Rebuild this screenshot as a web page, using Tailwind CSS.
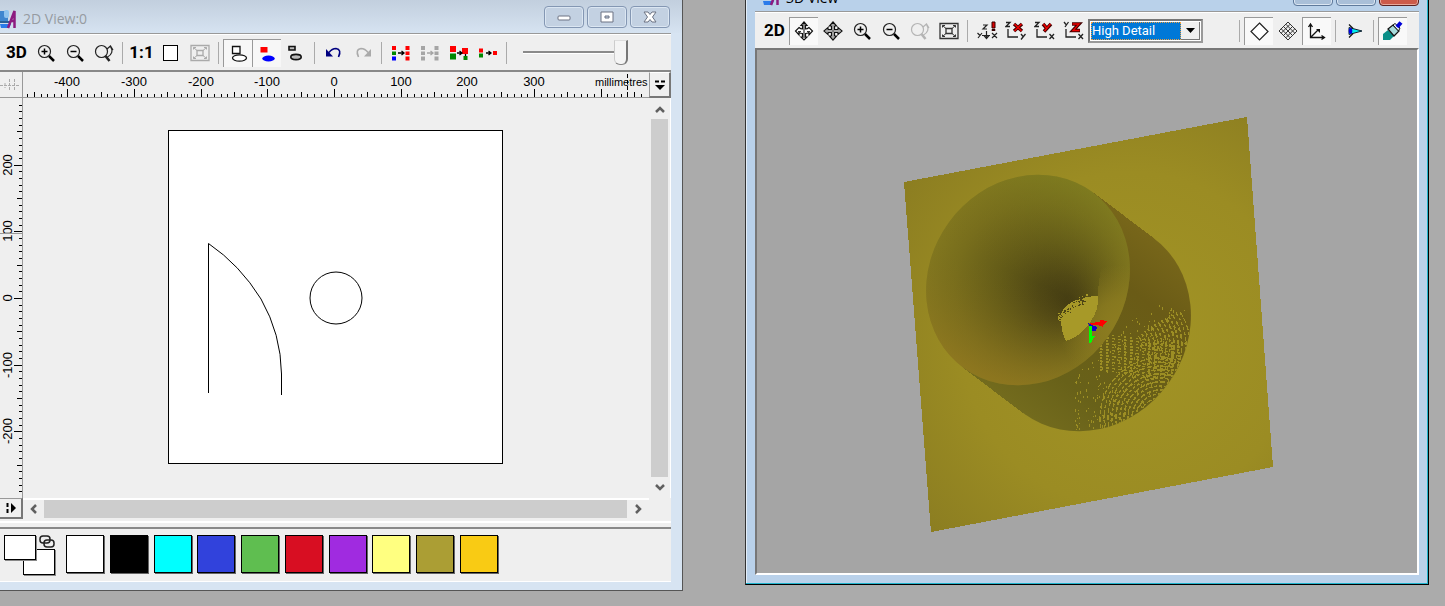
<!DOCTYPE html>
<html lang="en">
<head>
    <meta charset="UTF-8">
    <meta name="viewport" content="width=device-width, initial-scale=1.0">
    <title>2D View / 3D View</title>
    <script src="https://cdn.jsdelivr.net/npm/@tailwindcss/browser@4"></script>
</head>
<body class="bg-[#ababab] font-['Liberation_Sans',Arial,sans-serif] text-black">

    <!-- Icon sprite -->
    <svg class="hidden" xmlns="http://www.w3.org/2000/svg">
        <symbol id="i-app" viewBox="0 0 18 20">
            <rect x="0" y="2" width="8" height="11" fill="#3f86cf"/>
            <rect x="4" y="1" width="5" height="8" rx="2" fill="#8fc3ee"/>
            <path d="M0 12h10v2H0z" fill="#2a5f96"/>
            <path d="M0 15h11l-2 4H1z" fill="#2b7bea"/>
            <path d="M8 19L14.500 2V19M10 12h5" fill="none" stroke="#8d1b80" stroke-width="2.500"/>
        </symbol>
        <symbol id="i-zoom-in" viewBox="0 0 20 20">
            <circle cx="8.500" cy="8.500" r="6" fill="none" stroke="#222" stroke-width="1.200"/>
            <path d="M5.500 8.500h6M8.500 5.500v6" stroke="#000" stroke-width="1.500"/>
            <path d="M13 13l5 5" stroke="#000" stroke-width="2.500"/>
        </symbol>
        <symbol id="i-zoom-out" viewBox="0 0 20 20">
            <circle cx="8.500" cy="8.500" r="6" fill="none" stroke="#222" stroke-width="1.200"/>
            <path d="M5.500 8.500h6" stroke="#000" stroke-width="1.500"/>
            <path d="M13 13l5 5" stroke="#000" stroke-width="2.500"/>
        </symbol>
        <symbol id="i-zoom-prev" viewBox="0 0 20 20">
            <circle cx="7.500" cy="8.500" r="6" fill="none" stroke="currentColor" stroke-width="1.200"/>
            <path d="M11.500 13l4 5" stroke="currentColor" stroke-width="2.500"/>
            <path d="M13.500 14q7-4 3-10.500M13 6l3.500-3 2.500 4" fill="none" stroke="currentColor" stroke-width="1.200"/>
        </symbol>
        <symbol id="i-fit" viewBox="0 0 20 20">
            <path d="M1 2.500h18v15H1zM7 7.500h6v5H7z" fill="none" stroke="currentColor" stroke-width="1.300"/>
            <path d="M3.500 4.500l3.500 3M16.500 4.500l-3.500 3M3.500 15.500l3.500-3M16.500 15.500l-3.500-3M3.500 6.500v-2H6M16.500 6.500v-2H14M3.500 13.500v2H6M16.500 13.500v2H14" fill="none" stroke="currentColor" stroke-width="1"/>
        </symbol>
        <symbol id="i-move" viewBox="0 0 20 20">
            <path d="M10 1l3.500 4h-2v3.500H15v-2l4 3.500-4 3.500v-2h-3.500V15h2L10 19l-3.500-4h2v-3.500H5v2L1 10l4-3.500v2h3.500V5h-2z" fill="#fff" stroke="#111" stroke-width="1.200"/>
            <path d="M10 3v14M3 10h14" stroke="#555" stroke-width="1"/>
        </symbol>
        <symbol id="i-orbit" viewBox="0 0 20 20">
            <path d="M10 1l3 3.500h-1.500V8q2 0 3.500-1.500L18.500 10 15 14v-2.500q-2 1-3.500 1V16H13l-3 3-3-3h1.500v-3.500q-2 0-3.500-1V14l-3.500-4L5 6.500Q6.500 8 8.500 8V4.500H7z" fill="#fff" stroke="#111" stroke-width="1.200"/>
            <path d="M10 3v14M4 10.500h3M13 10.500h3" stroke="#333" stroke-width="1.200"/>
        </symbol>
        <symbol id="i-shapes" viewBox="0 0 20 20">
            <path d="M4.500 3.500h7.500v7H4.500z" fill="#fff" stroke="#111" stroke-width="1.300"/>
            <ellipse cx="11.500" cy="15" rx="7" ry="3.200" fill="#fff" stroke="#111" stroke-width="1.300"/>
        </symbol>
        <symbol id="i-shapes-fill" viewBox="0 0 20 20">
            <path d="M3.500 4h7v5.500h-7z" fill="#f00"/>
            <ellipse cx="11.500" cy="15.500" rx="6.200" ry="3" fill="#00f"/>
        </symbol>
        <symbol id="i-shapes-small" viewBox="0 0 20 20">
            <path d="M3 3.500h6V7H3z" fill="#bbb" stroke="#111" stroke-width="1.600"/>
            <ellipse cx="10" cy="14" rx="5.200" ry="2.600" fill="#bbb" stroke="#111" stroke-width="1.600"/>
        </symbol>
        <symbol id="i-undo" viewBox="0 0 20 20">
            <path d="M5 9.500q3-4 7-4 6 1 2.500 8.500" fill="none" stroke="currentColor" stroke-width="1.600"/>
            <path d="M2 6v7.500h7z" fill="currentColor"/>
        </symbol>
        <symbol id="i-map" viewBox="0 0 20 20">
            <path d="M1 3h4v4H1zM14.500 3h4v4h-4zM14.500 8.500h4v3.500h-4zM14.500 13.500h4v4h-4z" fill="#f00"/>
            <path d="M1 8.500h4V12H1z" fill="#080"/>
            <path d="M1 13.500h4v4H1z" fill="#00f"/>
            <path d="M7 10h6M10.500 8l2.500 2-2.500 2" fill="none" stroke="#000" stroke-width="1.300"/>
        </symbol>
        <symbol id="i-map-off" viewBox="0 0 20 20">
            <path d="M1 3h4v4H1zM14.500 3h4v4h-4zM14.500 8.500h4v3.500h-4zM14.500 13.500h4v4h-4zM1 8.500h4V12H1zM1 13.500h4v4H1z" fill="#a5a5a5"/>
            <path d="M7 10h6M10.500 8l2.500 2-2.500 2" fill="none" stroke="#a5a5a5" stroke-width="1.300"/>
        </symbol>
        <symbol id="i-merge" viewBox="0 0 20 20">
            <path d="M1 3h6v6H1zM13 5h6v6h-6z" fill="#f00"/>
            <path d="M1 10.500h6v6H1zM14.500 13h4v4h-4z" fill="#080"/>
            <path d="M8 10h5M10.500 8l2.500 2-2.500 2M16.500 11v2" fill="none" stroke="#000" stroke-width="1.300"/>
        </symbol>
        <symbol id="i-merge-small" viewBox="0 0 20 20">
            <path d="M1 5.500h4v4H1zM15 8h4v4h-4z" fill="#f00"/>
            <path d="M1 10.500h4v4H1z" fill="#080"/>
            <path d="M8 10h5M10.500 8l2.500 2-2.500 2" fill="none" stroke="#000" stroke-width="1.300"/>
        </symbol>
        <symbol id="i-axis-iso" viewBox="0 0 22 20">
            <path d="M7 4h4L7 8h4M1.500 12l2.500 2.500M6 12l-4 5M16 12l5 5M21 12l-5 5M10.500 10v7M8 14.500l2.500 3 2.500-3M6 14.500h8" fill="none" stroke="#222" stroke-width="1.200"/>
            <path d="M16 1h3v6h-3zM16 8.500h3v1h-3z" fill="#d00" stroke="#300" stroke-width="1"/>
        </symbol>
        <symbol id="i-axis-x" viewBox="0 0 22 20">
            <path d="M1 1.500h4L1 5.500h4M3 8v8h10M16 13l2 2.500M20.500 13L16 18.500" fill="none" stroke="#222" stroke-width="1.300"/>
            <path d="M9 3l8 7M17 3l-8 7" stroke="#400" stroke-width="3.500"/>
            <path d="M9.500 3l7 7M16.500 3l-7 7" stroke="#e00" stroke-width="1.500"/>
        </symbol>
        <symbol id="i-axis-y" viewBox="0 0 22 20">
            <path d="M1 1.500h4L1 5.500h4M3 8v8h10M15.500 13l4.500 5M20 13l-4.500 5" fill="none" stroke="#222" stroke-width="1.300"/>
            <path d="M9 3l3.500 4M17 3l-7 7.500" stroke="#400" stroke-width="3.500"/>
            <path d="M9.500 3l3 4M16.500 3l-6 7" stroke="#e00" stroke-width="1.500"/>
        </symbol>
        <symbol id="i-axis-z" viewBox="0 0 22 20">
            <path d="M1 1l2 2.500M5.500 1L2 6M3 8v8h10M15.500 13l4.500 5M20 13l-4.500 5" fill="none" stroke="#222" stroke-width="1.300"/>
            <path d="M9 3h7l-6 6.500h7" fill="none" stroke="#400" stroke-width="3.500"/>
            <path d="M9.500 3H16l-6 6.500h6.500" fill="none" stroke="#e00" stroke-width="1.300"/>
        </symbol>
        <symbol id="i-diamond" viewBox="0 0 20 20">
            <path d="M10.500 2l8.500 8.500-8.500 8.500L2 10.500z" fill="#fff" stroke="#222" stroke-width="1.200"/>
        </symbol>
        <symbol id="i-mesh" viewBox="0 0 20 20">
            <path d="M10 1l9 9-9 9-9-9zM7.800 3.200l9 9M5.500 5.500l9 9M3.200 7.800l9 9M12.200 3.200l-9 9M14.500 5.500l-9 9M16.800 7.800l-9 9" fill="none" stroke="#333" stroke-width="1"/>
        </symbol>
        <symbol id="i-axes" viewBox="0 0 20 20">
            <path d="M3.500 4v12.500h13M3.500 16.500l8-8M1.500 6l2-3 2 3M14.500 14.500l3 2-3 2" fill="none" stroke="#111" stroke-width="1.300"/>
            <path d="M9 8h4v4z" fill="#111"/>
        </symbol>
        <symbol id="i-eye" viewBox="0 0 20 20">
            <path d="M4 6.500L17 10 4 13.500z" fill="#0ee" stroke="#123" stroke-width="1"/>
            <ellipse cx="5.500" cy="10" rx="1.800" ry="3" fill="#00d"/>
            <path d="M4 3.500l4 4M4 16.500l4-4" stroke="#111" stroke-width="1.200"/>
        </symbol>
        <symbol id="i-brush" viewBox="0 0 22 20">
            <path d="M1 13l5-4 6 6-4 4H1z" fill="#0a8f88"/>
            <path d="M6 8l5-4 6 6-5 5z" fill="#a8dcdc" stroke="#111" stroke-width="1.200"/>
            <path d="M11 4l2-1.500 5 4.500-1.500 3z" fill="#e8f6f6" stroke="#111" stroke-width="1"/>
            <path d="M15 6l4-4.500" stroke="#0000d8" stroke-width="4"/>
        </symbol>
    </svg>

    <main class="grid h-screen min-h-96 grid-cols-[683fr_684fr] gap-[62px] overflow-hidden pr-4 pb-[15px]">

        <!-- 2D window -->
        <section aria-label="2D View" class="flex min-w-0 flex-col border-r border-b border-[#555] bg-[#d7e4f2] pb-2">
            <header class="flex h-[33px] shrink-0 items-center bg-linear-to-b from-[#c2cfde] to-[#d6e3f1] pr-3">
                <svg class="mt-1 h-5 w-[18px]"><use href="#i-app"/></svg>
                <h1 class="mt-1 ml-[5px] font-['Open_Sans','Noto_Sans',sans-serif] text-sm text-[#969ba1]">2D View:0</h1>
                <div class="mt-px ml-auto flex gap-[3px]">
                    <button type="button" aria-label="Minimize" class="grid h-[22px] w-10 place-items-center rounded-sm border border-[#8497b3] bg-[#c3d1e2] shadow-[inset_0_0_0_1px_#dbe6f2]">
                        <svg width="14" height="8"><rect x="1" y="3" width="12" height="4" rx="1" fill="#fff" stroke="#6c7383"/></svg>
                    </button>
                    <button type="button" aria-label="Maximize" class="grid h-[22px] w-10 place-items-center rounded-sm border border-[#8497b3] bg-[#c3d1e2] shadow-[inset_0_0_0_1px_#dbe6f2]">
                        <svg width="14" height="12"><path d="M1 1h12v10H1zM5 5h4v2H5z" fill="#fff" fill-rule="evenodd" stroke="#6c7383"/></svg>
                    </button>
                    <button type="button" aria-label="Close" class="grid h-[22px] w-10 place-items-center rounded-sm border border-[#8497b3] bg-[#c3d1e2] shadow-[inset_0_0_0_1px_#dbe6f2]">
                        <svg width="14" height="12"><path d="M1 1h4l2 2.500L9 1h4L9.500 6l3.500 5H9L7 8.500 5 11H1l3.500-5z" fill="#fff" stroke="#6c7383"/></svg>
                    </button>
                </div>
            </header>

            <div class="mr-[11px] flex min-h-0 grow flex-col border-t border-[#999] bg-[#efefef]">
                <!-- Toolbar -->
                <div role="toolbar" aria-label="2D tools" class="flex h-[38px] shrink-0 items-center border-t border-b-2 border-t-white border-b-[#888] pl-[2px]">
                    <button type="button" class="h-7 w-[29px] font-[Roboto,sans-serif] text-[17px] font-bold">3D</button>
                    <button type="button" aria-label="Zoom in" class="grid h-7 w-[29px] place-items-center"><svg class="size-5"><use href="#i-zoom-in"/></svg></button>
                    <button type="button" aria-label="Zoom out" class="grid h-7 w-[29px] place-items-center"><svg class="size-5"><use href="#i-zoom-out"/></svg></button>
                    <button type="button" aria-label="Zoom previous" class="grid h-7 w-[29px] place-items-center text-[#222]"><svg class="size-5"><use href="#i-zoom-prev"/></svg></button>
                    <span class="mx-1 h-[22px] w-px bg-[#aaa]"></span>
                    <button type="button" class="h-7 w-[29px] font-[Roboto,sans-serif] text-[17px] font-bold">1:1</button>
                    <button type="button" aria-label="Zoom page" class="grid h-7 w-[29px] place-items-center"><span class="h-4 w-[15px] border border-black bg-white"></span></button>
                    <button type="button" aria-label="Zoom selection" class="grid h-7 w-[29px] place-items-center text-[#aaa]"><svg class="size-5"><use href="#i-fit"/></svg></button>
                    <span class="mx-1 h-[22px] w-px bg-[#aaa]"></span>
                    <button type="button" aria-label="Wireframe" aria-pressed="true" class="grid h-7 w-[29px] place-items-center border-t border-l border-[#999] bg-[#f7f7f7]"><svg class="size-5"><use href="#i-shapes"/></svg></button>
                    <button type="button" aria-label="Filled" aria-pressed="true" class="grid h-7 w-[29px] place-items-center border-t border-l border-[#999] bg-[#f7f7f7]"><svg class="size-5"><use href="#i-shapes-fill"/></svg></button>
                    <button type="button" aria-label="Outline" class="grid h-7 w-[29px] place-items-center"><svg class="size-5"><use href="#i-shapes-small"/></svg></button>
                    <span class="mx-1 h-[22px] w-px bg-[#aaa]"></span>
                    <button type="button" aria-label="Undo" class="grid h-7 w-[29px] place-items-center text-[#000080]"><svg class="size-5"><use href="#i-undo"/></svg></button>
                    <button type="button" aria-label="Redo" class="grid h-7 w-[29px] place-items-center text-[#aaa]"><svg class="size-5 -scale-x-100"><use href="#i-undo"/></svg></button>
                    <span class="mx-1 h-[22px] w-px bg-[#aaa]"></span>
                    <button type="button" aria-label="Link colours" class="grid h-7 w-[29px] place-items-center"><svg class="size-5"><use href="#i-map"/></svg></button>
                    <button type="button" aria-label="Unlink colours" class="grid h-7 w-[29px] place-items-center"><svg class="size-5"><use href="#i-map-off"/></svg></button>
                    <button type="button" aria-label="Add colour" class="grid h-7 w-[29px] place-items-center"><svg class="size-5"><use href="#i-merge"/></svg></button>
                    <button type="button" aria-label="Reduce colours" class="grid h-7 w-[29px] place-items-center"><svg class="size-5"><use href="#i-merge-small"/></svg></button>
                    <span class="mx-1 h-[22px] w-px bg-[#aaa]"></span>
                    <input type="range" aria-label="Contrast" min="0" max="100" value="100" class="ml-3 h-[26px] w-[105px] appearance-none bg-transparent [&::-webkit-slider-runnable-track]:h-[3px] [&::-webkit-slider-runnable-track]:border-b [&::-webkit-slider-runnable-track]:border-white [&::-webkit-slider-runnable-track]:bg-[#8a8a8a] [&::-webkit-slider-thumb]:-mt-[11px] [&::-webkit-slider-thumb]:h-[25px] [&::-webkit-slider-thumb]:w-[14px] [&::-webkit-slider-thumb]:appearance-none [&::-webkit-slider-thumb]:rounded-b-[6px] [&::-webkit-slider-thumb]:border-t [&::-webkit-slider-thumb]:border-r-2 [&::-webkit-slider-thumb]:border-b [&::-webkit-slider-thumb]:border-l [&::-webkit-slider-thumb]:border-t-[#ddd] [&::-webkit-slider-thumb]:border-r-[#777] [&::-webkit-slider-thumb]:border-b-[#888] [&::-webkit-slider-thumb]:border-l-[#ccc] [&::-webkit-slider-thumb]:bg-[#f4f4f4]">
                </div>

                <!-- Rulers, page and scroll bars -->
                <div class="grid min-h-0 grow grid-cols-[23px_1fr_22px] grid-rows-[26px_1fr_23px] border-b-2 border-white">
                    <div class="grid place-items-center border-r border-b border-[#999]">
                        <svg width="22" height="14"><path d="M0 7.500h20M9.500 1v12M14.500 1v12M5 5v5" stroke="#aaa" stroke-dasharray="3 1" fill="none"/></svg>
                    </div>
                    <svg id="ruler-x" class="h-full w-full overflow-hidden border-b border-[#999] text-[13px]"></svg>
                    <button type="button" aria-label="Ruler units" class="grid place-items-center border-t border-r-2 border-b-2 border-l border-t-white border-r-[#777] border-b-[#777] border-l-[#999]">
                        <svg width="12" height="12"><path d="M1 2.500h10" stroke="#000" stroke-width="2" stroke-dasharray="4 2"/><path d="M1 6h10l-5 5z"/></svg>
                    </button>

                    <svg id="ruler-y" class="h-full w-full overflow-hidden border-r border-[#999] text-[13px]"></svg>
                    <svg id="page" class="h-full w-full overflow-hidden" fill="none" stroke="#000">
                        <rect x="145.500" y="32.500" width="334" height="333" fill="#fff"/>
                        <path d="M185.500 295V145.500Q217 167 238 201Q258 236 258.500 276V297"/>
                        <circle cx="313" cy="200" r="26"/>
                    </svg>
                    <div class="flex flex-col border-r border-white px-[2px]">
                        <button type="button" aria-label="Scroll up" class="grid h-[21px] place-items-center"><svg width="12" height="8"><path d="M2 7l4-4 4 4" fill="none" stroke="#606060" stroke-width="2.500"/></svg></button>
                        <div class="grow bg-[#cdcdcd]"></div>
                        <button type="button" aria-label="Scroll down" class="grid h-[21px] place-items-center"><svg width="12" height="8"><path d="M2 1l4 4 4-4" fill="none" stroke="#606060" stroke-width="2.500"/></svg></button>
                    </div>

                    <button type="button" aria-label="Next view" class="mb-[2px] grid place-items-center border-t border-r-2 border-b-2 border-t-[#999] border-r-[#777] border-b-[#777]">
                        <svg width="12" height="12"><path d="M2.500 1v10" stroke="#000" stroke-width="2" stroke-dasharray="4 2"/><path d="M6 1v10l5-5z"/></svg>
                    </button>
                    <div class="flex items-stretch border-t-2 border-white pb-[3px]">
                        <button type="button" aria-label="Scroll left" class="grid w-[21px] place-items-center"><svg width="8" height="12"><path d="M6 2L2 6l4 4" fill="none" stroke="#606060" stroke-width="2.500"/></svg></button>
                        <div class="grow bg-[#cdcdcd]"></div>
                        <button type="button" aria-label="Scroll right" class="grid w-[22px] place-items-center"><svg width="8" height="12"><path d="M2 2l4 4-4 4" fill="none" stroke="#606060" stroke-width="2.500"/></svg></button>
                    </div>
                    <div></div>
                </div>

                <!-- Colour palette -->
                <div class="mt-1 flex h-[55px] shrink-0 items-start border-t-2 border-b border-t-[#888] border-b-white pt-[6px]">
                    <div class="relative ml-1 h-10 w-[51px]">
                        <button type="button" aria-label="Secondary colour" class="absolute right-0 bottom-0 h-[26px] w-8 border border-black bg-white shadow-[1px_1px_0_#888]"></button>
                        <button type="button" aria-label="Primary colour" class="absolute top-0 left-0 h-[25px] w-8 border border-black bg-white shadow-[1px_1px_0_#888]"></button>
                        <svg class="absolute top-0 right-0" width="16" height="14" fill="none" stroke="#222" stroke-width="1.500"><rect x="1" y="1" width="10" height="7" rx="3"/><rect x="5" y="5" width="10" height="7" rx="3"/></svg>
                    </div>
                    <div class="ml-[11px] flex w-[432px] justify-between">
                        <button type="button" aria-label="White" class="size-[38px] border border-black bg-white shadow-[1px_1px_0_#666]"></button>
                        <button type="button" aria-label="Black" class="size-[38px] border border-black bg-black shadow-[1px_1px_0_#666]"></button>
                        <button type="button" aria-label="Cyan" class="size-[38px] border border-black bg-[#00ffff] shadow-[1px_1px_0_#666]"></button>
                        <button type="button" aria-label="Blue" class="size-[38px] border border-black bg-[#3142dc] shadow-[1px_1px_0_#666]"></button>
                        <button type="button" aria-label="Green" class="size-[38px] border border-black bg-[#5fbe50] shadow-[1px_1px_0_#666]"></button>
                        <button type="button" aria-label="Red" class="size-[38px] border border-black bg-[#d80e22] shadow-[1px_1px_0_#666]"></button>
                        <button type="button" aria-label="Purple" class="size-[38px] border border-black bg-[#a02be0] shadow-[1px_1px_0_#666]"></button>
                        <button type="button" aria-label="Yellow" class="size-[38px] border border-black bg-[#ffff80] shadow-[1px_1px_0_#666]"></button>
                        <button type="button" aria-label="Olive" class="size-[38px] border border-black bg-[#ab9e34] shadow-[1px_1px_0_#666]"></button>
                        <button type="button" aria-label="Amber" class="size-[38px] border border-black bg-[#f9cb14] shadow-[1px_1px_0_#666]"></button>
                    </div>
                </div>
            </div>
        </section>

        <!-- 3D window, its title bar runs off the top of the desktop -->
        <section aria-label="3D View" class="mb-[6px] flex min-w-0 flex-col border-r border-b border-l border-black border-l-[#333] bg-[#b9d1ea] px-[9px] pb-[9px] shadow-[inset_-1px_-1px_0_#20b4cc,inset_1px_0_0_#e4eef8]">
            <header class="flex h-[11px] shrink-0 items-end">
                <svg class="ml-2 h-5 w-[18px] shrink-0 translate-y-[-5px]"><use href="#i-app"/></svg>
                <h2 class="mb-[5px] ml-[5px] font-['Open_Sans','Noto_Sans',sans-serif] text-sm leading-4">3D View</h2>
                <div class="mb-[5px] ml-auto flex gap-[3px]">
                    <button type="button" aria-label="Minimize" class="h-[22px] w-10 rounded-sm border border-[#5f7a9c] bg-[#a9bfd8] shadow-[inset_0_0_0_1px_#dbe6f2]"></button>
                    <button type="button" aria-label="Maximize" class="h-[22px] w-10 rounded-sm border border-[#5f7a9c] bg-[#a9bfd8] shadow-[inset_0_0_0_1px_#dbe6f2]"></button>
                    <button type="button" aria-label="Close" class="h-[22px] w-10 rounded-sm border border-[#5a2323] bg-[#cc5a4a] shadow-[inset_0_0_0_1px_#e8a79a]"></button>
                </div>
            </header>

            <div class="flex min-h-0 grow flex-col border-t border-[#999] bg-[#efefef]">
                <!-- Toolbar -->
                <div role="toolbar" aria-label="3D tools" class="flex h-9 shrink-0 items-center border-t border-white pl-[5px]">
                    <button type="button" class="h-7 w-[29px] font-[Roboto,sans-serif] text-[17px] font-bold">2D</button>
                    <button type="button" aria-label="Orbit" aria-pressed="true" class="grid h-7 w-[29px] place-items-center border-t border-l border-[#999] bg-[#f9f9f9]"><svg class="size-5"><use href="#i-orbit"/></svg></button>
                    <button type="button" aria-label="Pan" class="grid h-7 w-[29px] place-items-center"><svg class="size-5"><use href="#i-move"/></svg></button>
                    <button type="button" aria-label="Zoom in" class="grid h-7 w-[29px] place-items-center"><svg class="size-5"><use href="#i-zoom-in"/></svg></button>
                    <button type="button" aria-label="Zoom out" class="grid h-7 w-[29px] place-items-center"><svg class="size-5"><use href="#i-zoom-out"/></svg></button>
                    <button type="button" aria-label="Zoom previous" class="grid h-7 w-[29px] place-items-center text-[#b4b4b4]"><svg class="size-5"><use href="#i-zoom-prev"/></svg></button>
                    <button type="button" aria-label="Fit" class="grid h-7 w-[29px] place-items-center text-[#333]"><svg class="size-5"><use href="#i-fit"/></svg></button>
                    <span class="mx-1 h-[22px] w-px bg-[#aaa]"></span>
                    <button type="button" aria-label="Isometric view" class="grid h-7 w-[29px] place-items-center"><svg class="h-5 w-[22px]"><use href="#i-axis-iso"/></svg></button>
                    <button type="button" aria-label="View along X" class="grid h-7 w-[29px] place-items-center"><svg class="h-5 w-[22px]"><use href="#i-axis-x"/></svg></button>
                    <button type="button" aria-label="View along Y" class="grid h-7 w-[29px] place-items-center"><svg class="h-5 w-[22px]"><use href="#i-axis-y"/></svg></button>
                    <button type="button" aria-label="View down Z" class="grid h-7 w-[29px] place-items-center"><svg class="h-5 w-[22px]"><use href="#i-axis-z"/></svg></button>
                    <div class="mr-8 flex h-6 w-[115px] border-2 border-t-[#777] border-r-[#999] border-b-[#999] border-l-[#777] bg-white p-px">
                        <select aria-label="Shading detail" class="h-full min-w-0 grow appearance-none border border-dotted border-[#f0a040] bg-[#0078d7] font-[Roboto,sans-serif] text-[13px] leading-4 text-white">
                            <option>High Detail</option>
                            <option>Normal Detail</option>
                            <option>Low Detail</option>
                        </select>
                        <span class="pointer-events-none grid w-[19px] shrink-0 place-items-center border-r border-b border-[#777] bg-[#efefef]">
                            <svg width="9" height="5"><path d="M0 0h9L4.500 5z"/></svg>
                        </span>
                    </div>
                    <span class="mx-1 h-[22px] w-px bg-[#aaa]"></span>
                    <button type="button" aria-label="Draw zero plane" aria-pressed="true" class="grid h-7 w-[29px] place-items-center border-t border-l border-[#999] bg-[#f9f9f9]"><svg class="size-5"><use href="#i-diamond"/></svg></button>
                    <button type="button" aria-label="Wireframe" class="grid h-7 w-[29px] place-items-center"><svg class="size-5"><use href="#i-mesh"/></svg></button>
                    <button type="button" aria-label="Draw origin" aria-pressed="true" class="grid h-7 w-[29px] place-items-center border-t border-l border-[#999] bg-[#f9f9f9]"><svg class="size-5"><use href="#i-axes"/></svg></button>
                    <span class="mx-1 h-[22px] w-px bg-[#aaa]"></span>
                    <button type="button" aria-label="Lighting" class="grid h-7 w-[29px] place-items-center"><svg class="size-5"><use href="#i-eye"/></svg></button>
                    <span class="mx-1 h-[22px] w-px bg-[#aaa]"></span>
                    <button type="button" aria-label="Colour shading" aria-pressed="true" class="grid h-7 w-[29px] place-items-center border-t border-l border-[#999] bg-[#f9f9f9]"><svg class="h-5 w-[22px]"><use href="#i-brush"/></svg></button>
                </div>

                <!-- Relief model; the inner group uses desktop coordinates -->
                <div class="min-h-0 grow border-2 border-t-[#777] border-r-white border-b-white border-l-[#777] bg-[#a5a5a5]">
                    <svg class="h-full w-full overflow-hidden">
                        <defs>
                            <radialGradient id="plane" gradientUnits="userSpaceOnUse" cx="1130" cy="340" r="280">
                                <stop offset="0" stop-color="#a29425"/>
                                <stop offset=".6" stop-color="#9b8c23"/>
                                <stop offset="1" stop-color="#8b7d21"/>
                            </radialGradient>
                            <linearGradient id="wall" gradientUnits="userSpaceOnUse" x1="1150" y1="210" x2="1000" y2="410">
                                <stop offset="0" stop-color="#7c6a1b"/>
                                <stop offset=".3" stop-color="#6a5b16"/>
                                <stop offset=".75" stop-color="#686119"/>
                                <stop offset="1" stop-color="#756d1e"/>
                            </linearGradient>
                            <radialGradient id="bowl" gradientUnits="userSpaceOnUse" cx="1028" cy="280" r="112" fx="1068" fy="303">
                                <stop offset="0" stop-color="#443c12"/>
                                <stop offset=".2" stop-color="#4f4714"/>
                                <stop offset=".45" stop-color="#625a17"/>
                                <stop offset=".75" stop-color="#786e1c"/>
                                <stop offset="1" stop-color="#867b20"/>
                            </radialGradient>
                            <linearGradient id="tint" gradientUnits="userSpaceOnUse" x1="1070" y1="185" x2="990" y2="375">
                                <stop offset="0" stop-color="#707c1e" stop-opacity=".3"/>
                                <stop offset=".5" stop-color="#7a6a1c" stop-opacity="0"/>
                                <stop offset="1" stop-color="#96741f" stop-opacity=".5"/>
                            </linearGradient>
                            <radialGradient id="lip" gradientUnits="userSpaceOnUse" cx="1118" cy="325" r="60">
                                <stop offset="0" stop-color="#8c7c20"/>
                                <stop offset=".4" stop-color="#8c7c20" stop-opacity=".8"/>
                                <stop offset="1" stop-color="#8c7c20" stop-opacity="0"/>
                            </radialGradient>
                            <clipPath id="wall-clip">
                                <ellipse cx="1089" cy="326" rx="109" ry="98" transform="rotate(-54 1089 326)"/>
                            </clipPath>
                            <clipPath id="bowl-clip">
                                <ellipse cx="1028" cy="280" rx="109" ry="98" transform="rotate(-54 1028 280)"/>
                            </clipPath>
                        </defs>
                        <g transform="translate(-757 -50)" shape-rendering="crispEdges">
                            <path d="M904 182L1247 117L1273 467L931 532z" fill="url(#plane)"/>
                            <path d="M1094 193L1155 239L1023 413L962 367z" fill="url(#wall)"/>
                            <rect x="970" y="200" width="240" height="250" fill="url(#wall)" clip-path="url(#wall-clip)"/>
                            <g id="moire" clip-path="url(#wall-clip)" fill="none" stroke="#9c8e24"></g>
                            <g clip-path="url(#bowl-clip)">
                                <rect x="910" y="160" width="240" height="240" fill="url(#bowl)"/>
                                <rect x="910" y="160" width="240" height="240" fill="url(#tint)"/>
                                <path d="M1098 292Q1100 240 1140 230V400H1030Q1040 350 1066 341Q1095 325 1098 296z" fill="url(#lip)"/>
                            </g>
                            <path d="M1062 312Q1070 297 1098 296Q1099 310 1091 321Q1082 336 1066 341Q1062 334 1061 322z" fill="#a79928"/>
                            <g id="speckle"></g>
                            <path d="M1090 323l10-1 0-2 7 1-3 3-1 3-5-2-7 0z" fill="#f00"/>
                            <path d="M1088 323l4 2 5 2-1 4-4 0-2-3z" fill="#10c"/>
                            <path d="M1089 326h3v10h3l-2 3-2 4h-2z" fill="#0f0"/>
                        </g>
                    </svg>
                </div>
            </div>
        </section>
    </main>

    <script>
        const NS = 'http://www.w3.org/2000/svg';

        function add(parent, tag, attrs, text) {
            const el = document.createElementNS(NS, tag);
            for (const key in attrs) el.setAttribute(key, attrs[key]);
            if (text) el.textContent = text;
            parent.appendChild(el);
        }

        // Rulers: one tick per 10 mm, 200 px for every 300 mm
        const rulerX = document.getElementById('ruler-x');
        const rulerY = document.getElementById('ruler-y');
        const step = 20 / 3;

        for (let i = -46; i <= 46; i++) {
            const len = i % 10 === 0 ? 8 : i % 5 === 0 ? 5 : 3;
            const x = Math.round(311 + i * step);
            add(rulerX, 'rect', { x: x, y: 25 - len, width: 1, height: len });
            if (i % 10 === 0 && i < 40) {
                add(rulerX, 'text', { x: x, y: 14, 'text-anchor': 'middle' }, String(i * 10));
            }
        }
        add(rulerX, 'text', { x: 572, y: 14, class: 'text-[11px]' }, 'millimetres');
        add(rulerX, 'path', { d: 'M604.5 2v24', stroke: '#000', 'stroke-dasharray': '4 2' });

        for (let i = -29; i <= 29; i++) {
            const len = i % 10 === 0 ? 8 : i % 5 === 0 ? 5 : 3;
            const y = Math.round(200 - i * step);
            add(rulerY, 'rect', { x: 22 - len, y: y, width: len, height: 1 });
            if (i % 10 === 0) {
                add(rulerY, 'text', { transform: 'translate(12 ' + y + ') rotate(-90)', 'text-anchor': 'middle' }, String(i * 10));
            }
        }
        add(rulerY, 'path', { d: 'M0 135.500h22', stroke: '#999' });

        // Interference bands where the cone wall meets the plane
        const moire = document.getElementById('moire');
        function arc(cx, cy, r, from, to, dash) {
            const p = a => (cx + r * Math.cos(a * Math.PI / 180)) + ' ' + (cy + r * Math.sin(a * Math.PI / 180));
            add(moire, 'path', { d: 'M' + p(from) + 'A' + r + ' ' + r + ' 0 0 1 ' + p(to), 'stroke-dasharray': dash, 'stroke-width': r > 20 && r < 52 ? 1.6 : 1.2 });
        }
        for (let r = 12; r < 62; r += 4) arc(1130, 345, r, -48 + r / 4, 30, r % 8 ? '5 2' : '3 2');
        for (let r = 12; r < 64; r += 4) arc(1160, 418, r, 170, 285, r % 8 ? '5 2' : '3 2');
        for (let y = 340; y < 378; y += 3) {
            add(moire, 'path', { d: 'M1100 ' + (y - 6) + 'L1180 ' + (y + 4), 'stroke-dasharray': y % 2 ? '3 3' : '2 4', 'stroke-width': 1.4 });
        }

        let seed = 7;
        function rnd() {
            seed = (seed * 16807) % 2147483647;
            return seed / 2147483647;
        }
        for (let i = 0; i < 420; i++) {
            const x = Math.round(1075 + rnd() * 115);
            const y = Math.round(305 + rnd() * 125);
            if (x + y > 1450) add(moire, 'rect', { x: x, y: y, width: 1, height: 1 + Math.round(rnd() * 2), fill: '#9c8e24', stroke: 'none' });
        }

        // Broken edge of the through hole
        const speckle = document.getElementById('speckle');
        for (let i = 0; i < 120; i++) {
            const t = rnd();
            add(speckle, 'rect', {
                x: Math.round(1054 + t * 28 + rnd() * 5),
                y: Math.round(313 - t * 20 + rnd() * 8),
                width: 1 + Math.round(rnd()),
                height: 1 + Math.round(rnd()),
                fill: i % 3 ? '#a79928' : '#4d4514'
            });
        }
    </script>
</body>
</html>
